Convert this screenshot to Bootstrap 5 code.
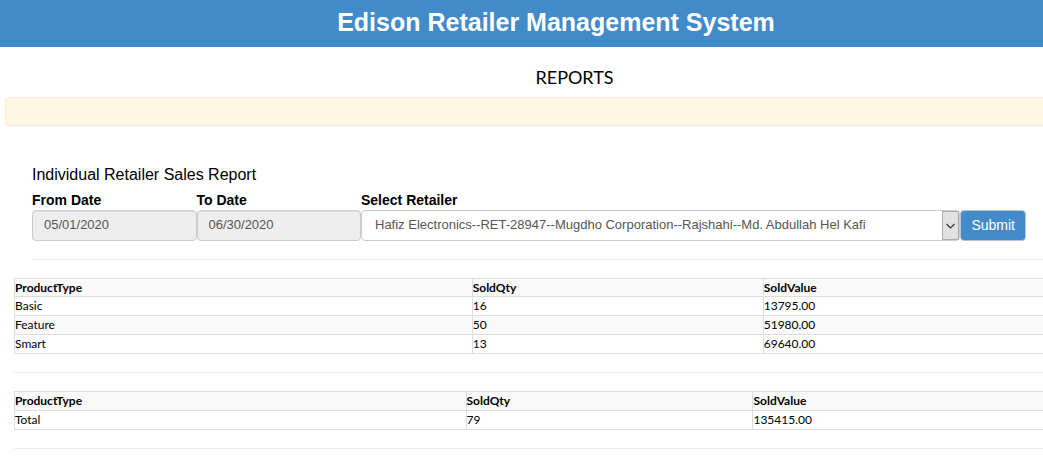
<!DOCTYPE html>
<html lang="en">
<head>
<meta charset="utf-8">
<meta name="viewport" content="width=device-width, initial-scale=1">
<title>Edison Retailer Management System</title>
<link href="https://cdn.jsdelivr.net/npm/bootstrap@5.3.0/dist/css/bootstrap.min.css" rel="stylesheet">
<style>
  body { font-family: "Liberation Sans", Arial, sans-serif; font-size: 14px; line-height: 20px; color: #000; background: #fff; }
  .site-header { background: #428bca; color: #fff; padding: 4px 0 7px 69px; }
  .site-title { font-size: 25px; line-height: 36px; font-weight: 700; }
  .page-title { font-family: Lato, sans-serif; font-size: 18px; line-height: 20px; padding: 20px 0 10px 106px; }
  .notice { height: 29px; margin-left: 5px; background: #fdf7e3; border: 1px solid #f8ecd0; border-right: 0; border-radius: 4px 0 0 4px; }
  .report-form { margin: 39px 0 0 32px; }
  .report-heading { font-size: 16px; line-height: 20px; margin-bottom: 5px; }
  .filters { margin-right: 17px; }
  .filters label { font-weight: 700; line-height: 20px; display: block; }
  .date-col { width: 16.55%; }
  .filters .form-control, .filters .form-select { height: 31px; padding: 4px 11px 6px; font-size: 13px; line-height: 19px; color: #555; border: 1px solid #ccc; border-radius: 4px; }
  .filters .form-control { background: #eee; box-shadow: inset 0 1px 1px rgba(0,0,0,.08); }
  .filters .form-select { background: #fff; padding-left: 13px; padding-right: 20px; }
  .select-arrow { top: 1px; right: 1px; width: 17px; height: 29px; background: #e1e1e1; border: 1px solid #adadad; pointer-events: none; }
  .btn-submit { height: 31px; padding: 3px 10px 5px; font-size: 14px; line-height: 20px; color: #fff; background: #428bca; border: 1px solid #b8c4d0; border-radius: 4px; }
  .btn-submit:hover { background: #3276b1; color: #fff; }
  .rule { margin: 18px 0; border: 0; border-top: 1px solid #eee; opacity: 1; }
  .results { margin-left: 14px; }
  .sales { width: 100%; table-layout: fixed; border-collapse: collapse; font-family: Lato, sans-serif; font-size: 12px; line-height: 18px; }
  .sales th, .sales td { padding: 0; border: 1px solid #ddd; border-right: 0; }
  .sales-detail th { line-height: 17px; }
  .sales tr:nth-child(odd) { background: #f9f9f9; }
  .w-type { width: 44.5%; } .w-qty { width: 28.3%; }
  .w-type-total { width: 43.9%; } .w-qty-total { width: 27.9%; }
</style>
</head>
<body>
<header class="site-header text-center"><h1 class="site-title m-0">Edison Retailer Management System</h1></header>
<main>
  <h2 class="page-title text-center fw-normal m-0">REPORTS</h2>
  <div class="notice" role="status"></div>

  <form class="report-form">
    <h3 class="report-heading fw-normal">Individual Retailer Sales Report</h3>
    <div class="filters d-flex align-items-end">
      <div class="date-col"><label for="from">From Date</label><input class="form-control" id="from" type="text" value="05/01/2020" readonly></div>
      <div class="date-col"><label for="to">To Date</label><input class="form-control" id="to" type="text" value="06/30/2020" readonly></div>
      <div class="flex-grow-1">
        <label for="retailer">Select Retailer</label>
        <div class="position-relative">
          <select class="form-select" id="retailer"><option>Hafiz Electronics--RET-28947--Mugdho Corporation--Rajshahi--Md. Abdullah Hel Kafi</option></select>
          <span class="select-arrow position-absolute d-flex align-items-center justify-content-center">
            <svg width="9" height="6" viewBox="0 0 9 6" fill="none" stroke="#333" stroke-width="1.2" aria-hidden="true"><path d="M.5 1l4 4 4-4"/></svg>
          </span>
        </div>
      </div>
      <button class="btn btn-submit" type="button">Submit</button>
    </div>
    <hr class="rule">
  </form>

  <section class="results">
    <table class="sales sales-detail">
      <colgroup><col class="w-type"><col class="w-qty"><col></colgroup>
      <tbody>
        <tr><th scope="col">ProductType</th><th scope="col">SoldQty</th><th scope="col">SoldValue</th></tr>
        <tr><td>Basic</td><td>16</td><td>13795.00</td></tr>
        <tr><td>Feature</td><td>50</td><td>51980.00</td></tr>
        <tr><td>Smart</td><td>13</td><td>69640.00</td></tr>
      </tbody>
    </table>
    <hr class="rule">
    <table class="sales">
      <colgroup><col class="w-type-total"><col class="w-qty-total"><col></colgroup>
      <tbody>
        <tr><th scope="col">ProductType</th><th scope="col">SoldQty</th><th scope="col">SoldValue</th></tr>
        <tr><td>Total</td><td>79</td><td>135415.00</td></tr>
      </tbody>
    </table>
    <hr class="rule mb-0">
  </section>
</main>
<script src="https://cdn.jsdelivr.net/npm/bootstrap@5.3.0/dist/js/bootstrap.bundle.min.js"></script>
</body>
</html>
